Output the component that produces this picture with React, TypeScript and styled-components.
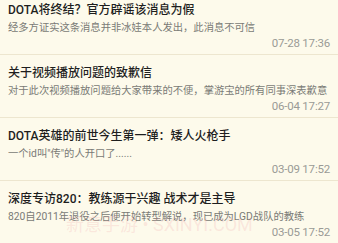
import React from "react";
import styled, { createGlobalStyle } from "styled-components";

const GlobalStyle = createGlobalStyle`
  html, body {
    margin: 0;
    padding: 0;
    background: #fdfaeb;
  }
  body {
    width: 338px;
    height: 243px;
    overflow: hidden;
    font-family: "Roboto", "Noto Sans CJK SC", sans-serif;
  }
`;

const Screen = styled.div`
  position: relative;
  width: 338px;
  height: 243px;
  overflow: hidden;
  background: #fdfaeb;
`;

const List = styled.ul`
  list-style: none;
  margin: -8px 0 0 0;
  padding: 0;
  display: flex;
  flex-direction: column;
`;

const Item = styled.li`
  display: flex;
  flex-direction: column;
  padding: 10px 8px 4px 8px;
  border-bottom: 1px solid #ede6cf;
`;

const Title = styled.div`
  font-size: 12px;
  line-height: 16px;
  font-weight: 500;
  color: #1e1e1e;
  white-space: nowrap;
`;

const Summary = styled.div`
  margin-top: 3px;
  font-size: 10.3px;
  line-height: 14px;
  color: #7a7a76;
  white-space: nowrap;
  overflow: hidden;
`;

const Time = styled.div`
  margin-top: 1px;
  align-self: flex-end;
  font-family: "Roboto", sans-serif;
  font-size: 11.5px;
  line-height: 14px;
  color: #9a9a96;
  letter-spacing: -0.2px;
`;

const Watermark = styled.div`
  position: absolute;
  left: 66px;
  top: 216px;
  font-family: "Roboto", "Noto Sans CJK SC", sans-serif;
  font-size: 18px;
  line-height: 17px;
  color: rgba(240, 150, 160, 0.2);
  white-space: nowrap;
  pointer-events: none;
`;

const news = [
  {
    title: "DOTA将终结？官方辟谣该消息为假",
    summary: "经多方证实这条消息并非冰娃本人发出，此消息不可信",
    time: "07-28 17:36",
  },
  {
    title: "关于视频播放问题的致歉信",
    summary: "对于此次视频播放问题给大家带来的不便，掌游宝的所有同事深表歉意",
    time: "06-04 17:27",
  },
  {
    title: "DOTA英雄的前世今生第一弹：矮人火枪手",
    summary: "一个id叫\"传\"的人开口了......",
    time: "03-09 17:52",
  },
  {
    title: "深度专访820：教练源于兴趣 战术才是主导",
    summary: "820自2011年退役之后便开始转型解说，现已成为LGD战队的教练",
    time: "03-05 17:52",
  },
];

export default function App() {
  return (
    <>
      <GlobalStyle />
      <Screen>
        <List>
          {news.map((n) => (
            <Item key={n.time}>
              <Title>{n.title}</Title>
              <Summary>{n.summary}</Summary>
              <Time>{n.time}</Time>
            </Item>
          ))}
        </List>
        <Watermark>新意手游 • SXINYI.COM</Watermark>
      </Screen>
    </>
  );
}
